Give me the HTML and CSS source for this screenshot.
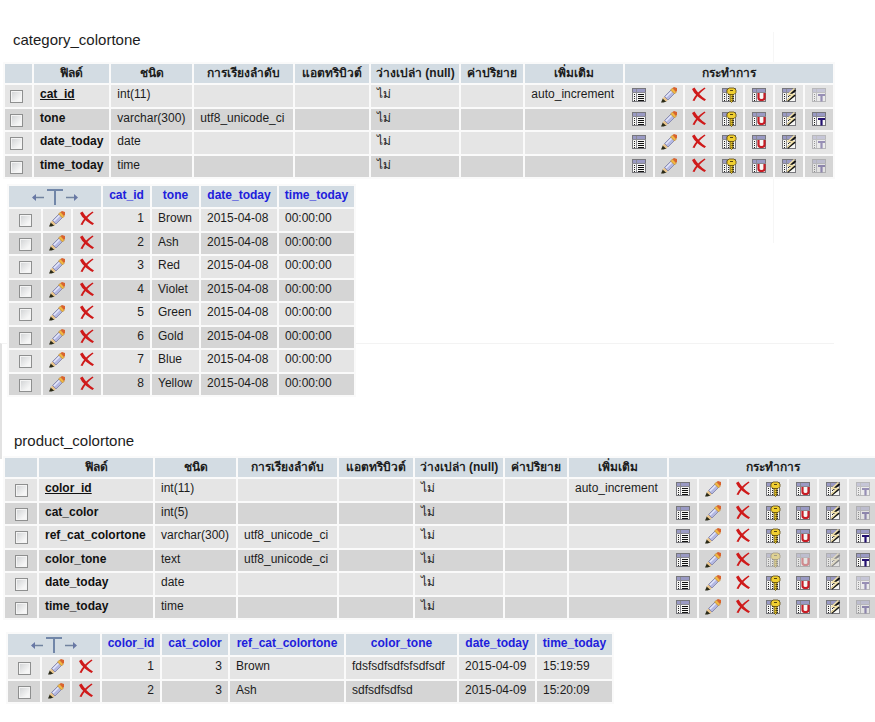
FILE: index.html
```html
<!DOCTYPE html>
<html lang="th">
<head>
<meta charset="utf-8">
<title>colortone</title>
<link rel="stylesheet" href="styles.css">
</head>
<body>
<svg class="sprite" aria-hidden="true">
  <symbol id="frame" viewBox="0 0 16 16">
    <rect x="1.5" y="1.5" width="13" height="13" fill="#f6f6f4" stroke="#77777c"/>
    <rect x="2" y="2" width="12" height="3" fill="#9a9ac4"/>
    <path d="M1 5.5h14M5.5 2v12" stroke="#8a8a92"/>
    <path d="M3.500 7v7" stroke="#222" stroke-dasharray="1 1"/>
  </symbol>
  <symbol id="list" viewBox="0 0 16 16">
    <use href="#frame"/>
    <path d="M7 7.500h6M7 9.500h6M7 11.500h6M7 13.500h6" stroke="#111"/>
  </symbol>
  <symbol id="edit" viewBox="0 0 16 16">
    <path d="M0 15.500l2-4.500 3.500 3.500-3 1z" fill="#2a2a18"/>
    <path d="M1.500 11.500l2-2 3.500 3.500-2 1.500z" fill="#e8c48c"/>
    <path d="M3.500 9.500L10 3l3.500 3.500L7 13z" fill="#b4b8e2" stroke="#7c7fa4" stroke-width=".8"/>
    <path d="M5 10l6-6" stroke="#e4e7fa" stroke-width="1.500"/>
    <path d="M9.500 3l2-2 4 4-2 2z" fill="#f2b843" stroke="#a9792c" stroke-width=".5"/>
    <path d="M11.500 1L13 0l3 1v2.500L15 5z" fill="#d9622d"/>
  </symbol>
  <symbol id="drop" viewBox="0 0 16 16">
    <path d="M1 2l2.500-1.500C6 5 10 9.500 15 12.500L13.500 14C9 11.500 3 7 1 2z" fill="#cf1a1a"/>
    <path d="M14.500 1.500C9 5.500 6 9 3.500 14L1.500 13.500C4 8 8 4 13.500.5z" fill="#cf1a1a"/>
  </symbol>
  <symbol id="key" viewBox="0 0 16 16">
    <use href="#frame"/>
    <path d="M7.500 7v7M12.500 7v7" stroke="#222" stroke-dasharray="1 1"/>
    <path d="M9 7h3v7l-1.500 1.500L9 14z" fill="#e9c82d" stroke="#4b3d0b" stroke-width=".8"/>
    <path d="M8 1h5l2 2v2.500l-2 2H8l-2-2V3z" fill="#f0cf32" stroke="#5a480c" stroke-width=".8"/>
    <path d="M9 3.500h3M10.500 9.500h1.500M10.500 11.500h1.500M10.500 13.500h1" stroke="#55450f"/>
  </symbol>
  <symbol id="uniq" viewBox="0 0 16 16">
    <use href="#frame"/>
    <path d="M7.500 6v5q0 2 3 2t3-2V6" fill="none" stroke="#c71d25" stroke-width="2.200"/>
  </symbol>
  <symbol id="index" viewBox="0 0 16 16">
    <use href="#frame"/>
    <path d="M7.500 7v7" stroke="#222" stroke-dasharray="1 1"/>
    <path d="M14.500 3L8 8.500M14 8l-7.500 6" stroke="#111" stroke-width="2"/>
    <path d="M13.500 1.500L7 7.500h5.500L6 13.500" fill="none" stroke="#f0dfa6" stroke-width="1.500"/>
  </symbol>
  <symbol id="full" viewBox="0 0 16 16">
    <use href="#frame"/>
    <path d="M7 8h7M10.500 8v6.500" stroke="#241170" stroke-width="2.200"/>
  </symbol>
  <symbol id="arrows" viewBox="0 0 48 20">
    <path d="M2 11.500h11M35 11.500h10" stroke="#71839f" stroke-width="1.300"/>
    <path d="M1 11.500l4-3.500v7zM47 11.500l-4-3.500v7z" fill="#6878a5"/>
    <path d="M16 4h16M24 4v15" stroke="#7186a8" stroke-width="2"/>
  </symbol>
</svg>
<main class="page">
  <h1 class="title">category_colortone</h1>
  <table class="grid structure compact" id="category-structure"></table>
  <table class="grid data" id="category-data"></table>
  <h1 class="title second">product_colortone</h1>
  <table class="grid structure" id="product-structure"></table>
  <table class="grid data last" id="product-data"></table>
</main>
<script src="script.js"></script>
</body>
</html>
```
FILE: styles.css
```css
* {
  box-sizing: border-box;
}

body {
  margin: 0;
  background: #fff;
  color: #1c1c1c;
  font: 12px/18px "Liberation Sans", Arial, "Noto Sans", sans-serif;
  overflow-x: hidden;
}

.sprite {
  position: absolute;
  width: 0;
  height: 0;
}

.page {
  position: relative;
  padding: 30px 0 16px 3px;
}

/* Faint guide lines behind the tables */
.page::before {
  content: "";
  position: absolute;
  left: 354px;
  top: 32px;
  width: 419px;
  height: 211px;
  border-right: 1px solid #f6f6f6;
  z-index: -1;
}

.page::after {
  content: "";
  position: absolute;
  left: 0;
  top: 343px;
  width: 832px;
  height: 115px;
  border-top: 1px solid #f3f3f3;
  border-left: 2px solid #e2e2e2;
  z-index: -1;
}

.title {
  margin: 0 0 12px 10px;
  font-size: 15px;
  line-height: 20px;
  font-weight: normal;
}

.title.second {
  margin: 34px 0 5px 11px;
}

.grid {
  width: max-content;
  border-collapse: separate;
  border-spacing: 2px;
  background: #fafafa;
}

.data {
  margin: 5px 0 0 4px;
}

.data.last {
  margin: 12px 0 0 3px;
}

th,
td {
  padding: 0 6px;
  white-space: nowrap;
  vertical-align: top;
  text-align: left;
}

thead th {
  height: 19px;
  background: #d3dce3;
  text-align: center;
}

.structure thead th {
  padding: 0;
}

.data thead th {
  height: 21px;
  padding: 0 5px;
}

tbody tr {
  height: 22px;
  background: #e5e5e5;
}

tbody tr:nth-child(even) {
  height: 21px;
  background: #d5d5d5;
}

tbody th {
  color: #111;
}

.key-field {
  text-decoration: underline;
}

.number {
  text-align: right;
}

.pick,
.action {
  padding: 0;
  text-align: center;
  vertical-align: middle;
  line-height: 0;
}

.compact .pick {
  padding-left: 5px;
  text-align: left;
}

input {
  appearance: none;
  width: 13px;
  height: 13px;
  margin: 1px 0 0;
  border: 1px solid #8e8f8f;
  background: linear-gradient(135deg, #cfd1d3, #f6f6f6 75%);
  box-shadow: inset 0 0 0 1px #f4f4f4;
  vertical-align: middle;
}

.icon {
  width: 16px;
  height: 16px;
  vertical-align: top;
}

.action a {
  display: inline-block;
  height: 18px;
}

.disabled {
  opacity: 0.4;
}

.arrows {
  width: 48px;
  height: 20px;
  vertical-align: top;
}

.data thead a {
  color: #2020dc;
  text-decoration: none;
}
```
FILE: script.js
```js
const ACTIONS = ["list", "edit", "drop", "key", "uniq", "index", "full"];
const HEADINGS = ["", "ฟิลด์", "ชนิด", "การเรียงลำดับ", "แอตทริบิวต์", "ว่างเปล่า (null)", "ค่าปริยาย", "เพิ่มเติม"];

const columns = (widths) =>
  `<colgroup>${widths.map((w) => `<col style="width:${w}px">`).join("")}</colgroup>`;

const pick = (name) =>
  `<td class="pick"><input type="checkbox" aria-label="${name}"></td>`;

const action = (name, disabled) =>
  `<td class="action"><a href="#" aria-label="${name}"><svg class="icon${disabled ? " disabled" : ""}"><use href="#${name}"/></svg></a></td>`;

function structure(id, widths, fields) {
  const head = HEADINGS.map((h) => `<th scope="col">${h}</th>`).join("");
  const rows = fields.map(([name, type, collation, extra, off], i) => `<tr>
    ${pick(name)}
    <th scope="row"><span class="${i === 0 ? "key-field" : ""}">${name}</span></th>
    <td>${type}</td><td>${collation}</td><td></td><td>ไม่</td><td></td><td>${extra}</td>
    ${ACTIONS.map((a) => action(a, off.includes(a))).join("")}</tr>`).join("");
  document.getElementById(id).innerHTML =
    `${columns([...widths, ...ACTIONS.map(() => 28)])}<thead><tr>${head}<th colspan="7">กระทำการ</th></tr></thead><tbody>${rows}</tbody>`;
}

function data(id, widths, names, records) {
  const head = names.map((n) => `<th scope="col"><a href="#">${n}</a></th>`).join("");
  const rows = records.map((r) => `<tr>${pick("row " + r[0])}${action("edit")}${action("drop")}
    ${r.map((v) => `<td class="${typeof v === "number" ? "number" : ""}">${v}</td>`).join("")}</tr>`).join("");
  document.getElementById(id).innerHTML =
    `${columns([32, 28, 28, ...widths])}<thead><tr><th colspan="3"><svg class="arrows"><use href="#arrows"/></svg></th>${head}</tr></thead><tbody>${rows}</tbody>`;
}

structure("category-structure", [27, 75, 81, 99, 74, 88, 62, 98], [
  ["cat_id", "int(11)", "", "auto_increment", ["full"]],
  ["tone", "varchar(300)", "utf8_unicode_ci", "", []],
  ["date_today", "date", "", "", ["full"]],
  ["time_today", "time", "", "", ["full"]],
]);

data("category-data", [47, 47, 76, 75], ["cat_id", "tone", "date_today", "time_today"],
  ["Brown", "Ash", "Red", "Violet", "Green", "Gold", "Blue", "Yellow"]
    .map((tone, i) => [i + 1, tone, "2015-04-08", "00:00:00"]));

structure("product-structure", [32, 114, 81, 99, 74, 88, 62, 98], [
  ["color_id", "int(11)", "", "auto_increment", ["full"]],
  ["cat_color", "int(5)", "", "", ["full"]],
  ["ref_cat_colortone", "varchar(300)", "utf8_unicode_ci", "", []],
  ["color_tone", "text", "utf8_unicode_ci", "", ["key", "uniq", "index"]],
  ["date_today", "date", "", "", ["full"]],
  ["time_today", "time", "", "", ["full"]],
]);

data("product-data", [58, 66, 114, 111, 76, 75],
  ["color_id", "cat_color", "ref_cat_colortone", "color_tone", "date_today", "time_today"], [
    [1, 3, "Brown", "fdsfsdfsdfsfsdfsdf", "2015-04-09", "15:19:59"],
    [2, 3, "Ash", "sdfsdfsdfsd", "2015-04-09", "15:20:09"],
  ]);
```
